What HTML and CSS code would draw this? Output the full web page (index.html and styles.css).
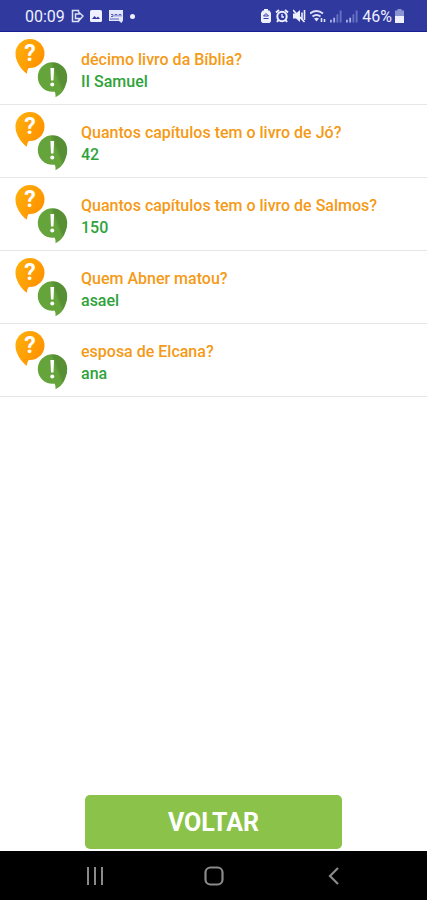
FILE: index.html
```html
<!DOCTYPE html>
<html lang="pt-BR">
<head>
<meta charset="utf-8">
<meta name="viewport" content="width=device-width, initial-scale=1">
<title>Perguntas</title>
<link rel="stylesheet" href="styles.css">
</head>
<body>
<svg class="defs" aria-hidden="true">
  <defs>
    <linearGradient id="amber" gradientUnits="userSpaceOnUse" x1="1" x2="31" y1="5" y2="20">
      <stop offset="0" stop-color="#ffb00a"/>
      <stop offset="1" stop-color="#ff9200"/>
    </linearGradient>
    <linearGradient id="leaf" gradientUnits="userSpaceOnUse" x1="30" x2="50" y1="45" y2="37">
      <stop offset="0.600" stop-color="#65a43a"/>
      <stop offset="0.750" stop-color="#568f34"/>
    </linearGradient>
    <symbol id="qa" viewBox="0 0 54 60">
      <g fill="url(#amber)">
        <circle cx="16" cy="15.500" r="14.500"/>
        <path d="M1.600 18C3 25 7 32 13 35.700c0-2.500 .5-4.200 2-5.900L20 20z"/>
      </g>
      <text x="16" y="23" class="mark">?</text>
      <g fill="url(#leaf)">
        <circle cx="38.500" cy="39" r="14.700"/>
        <path d="M53.100 41C52 49 48.500 56 41.500 59.200c.2-2.300 0-4-1-5.700L36 45z"/>
      </g>
      <path fill="#fff" d="M36.400 30h3.700l-.6 12.500H37z"/>
      <circle cx="38.250" cy="46.500" r="2" fill="#fff"/>
    </symbol>
  </defs>
</svg>

<header class="status">
  <div class="group">
    <span class="time">00:09</span>
    <svg width="13" height="14" viewBox="0 0 13 14" fill="none" stroke="#dde1fa" stroke-width="1.500"><path d="M7.500 3V1.500H1.500v11h6V11M4.500 5v4.500h3.500v2L12 7 8 3.500V5z"/></svg>
    <svg width="12" height="12" viewBox="0 0 12 12"><rect width="12" height="12" rx="1.500" fill="#eef0ff"/><path d="M2 9l2.500-3 2 2 1.500-1.500L10 9z" fill="#303a9e"/></svg>
    <svg width="16" height="13" viewBox="0 0 16 13"><path d="M1 0h14v10.500L13.500 13 11 11H1z" fill="#e4e7fb"/><path d="M3 4.500h2v2H3m4 0v-2h2v2m2 0v-2h2v2M2 9h9" stroke="#5660b4" fill="none"/></svg>
    <span class="dot"></span>
  </div>
  <div class="group right">
    <svg width="10" height="14" viewBox="0 0 10 14"><path d="M3 0h4v1.500h1.500L10 4v8.500L8.500 14h-7L0 12.500V4l1.500-2.500H3z" fill="#eef0ff"/><path d="M5 4.500L2.500 7h5zM2.500 9.500h5" stroke="#303a9e" fill="none"/></svg>
    <svg width="14" height="14" viewBox="0 0 14 14" fill="none" stroke="#eef0ff" stroke-width="2"><circle cx="7" cy="7.500" r="4.700"/><path d="M1 3.500L4 1M13 3.500L10 1M3.500 11l-1.500 2M10.500 11l1.500 2"/><path d="M7 5v3h2" stroke-width="1.300"/></svg>
    <svg width="13" height="14" viewBox="0 0 13 14"><path d="M0 4.500h3L7 1v12L3 9.500H0z" fill="#eef0ff"/><path d="M0 1l11.500 12M9 3.500v7M11.500 1v10" stroke="#eef0ff" stroke-width="1.600"/></svg>
    <svg width="16" height="14" viewBox="0 0 16 14" fill="none" stroke="#dfe3fa" stroke-width="2"><path d="M0 4.500Q6.500 -.5 13 4.500M2.500 7.500Q6.500 4.500 10.500 7.500"/><path d="M6.500 12.500L4 9.500Q6.500 8 9 9.500z" fill="#dfe3fa" stroke="none"/><path d="M11.500 9v4M14.500 10v3" stroke-width="1.600"/></svg>
    <svg width="12" height="14" viewBox="0 0 13 14" fill="#aab1e6"><path d="M0 11h2v3H0zM3.500 9h2v5h-2z"/><path d="M7 5h2v9H7zM10.500 1h2v13h-2z" fill="#6872c2"/></svg>
    <svg width="12" height="14" viewBox="0 0 13 14" fill="#aab1e6"><path d="M0 11h2v3H0zM3.500 9h2v5h-2z"/><path d="M7 5h2v9H7zM10.500 1h2v13h-2z" fill="#6872c2"/></svg>
    <span class="battery">46%<svg width="9" height="14" viewBox="0 0 9 14"><path d="M2.500 0h4v1.500H9V8H0V1.500h2.500z" fill="#8b93d2"/><path d="M0 7h9v7H0z" fill="#eef0ff"/></svg></span>
  </div>
</header>

<main class="content">
  <ul class="list">
    <li class="row"><svg class="qa"><use href="#qa"/></svg><div class="texts"><p class="question">décimo livro da Bíblia?</p><p class="answer">II Samuel</p></div></li>
    <li class="row"><svg class="qa"><use href="#qa"/></svg><div class="texts"><p class="question">Quantos capítulos tem o livro de Jó?</p><p class="answer">42</p></div></li>
    <li class="row"><svg class="qa"><use href="#qa"/></svg><div class="texts"><p class="question">Quantos capítulos tem o livro de Salmos?</p><p class="answer">150</p></div></li>
    <li class="row"><svg class="qa"><use href="#qa"/></svg><div class="texts"><p class="question">Quem Abner matou?</p><p class="answer">asael</p></div></li>
    <li class="row"><svg class="qa"><use href="#qa"/></svg><div class="texts"><p class="question">esposa de Elcana?</p><p class="answer">ana</p></div></li>
  </ul>
  <button class="back" type="button">VOLTAR</button>
</main>

<nav class="navbar">
  <button type="button" aria-label="Recentes"><svg width="20" height="20" viewBox="0 0 20 20" fill="none" stroke="#8a8a8a" stroke-width="2"><path d="M3 1v18M10 1v18M17 1v18"/></svg></button>
  <button type="button" aria-label="Início"><svg width="20" height="20" viewBox="0 0 20 20" fill="none" stroke="#8a8a8a" stroke-width="2.200"><rect x="1.500" y="1.500" width="17" height="17" rx="5"/></svg></button>
  <button type="button" aria-label="Voltar"><svg width="20" height="20" viewBox="0 0 20 20" fill="none" stroke="#8a8a8a" stroke-width="2.200"><path d="M14 2L6 10l8 8"/></svg></button>
</nav>
</body>
</html>
```
FILE: styles.css
```css
* {
  box-sizing: border-box;
}

body {
  margin: 0;
  min-height: 100vh;
  display: flex;
  flex-direction: column;
  background: #fff;
  font-family: Roboto, sans-serif;
}

.defs {
  position: absolute;
  width: 0;
  height: 0;
}

.mark {
  fill: #fff;
  font-family: Roboto, sans-serif;
  font-size: 23px;
  font-weight: 700;
  text-anchor: middle;
}

.status {
  display: flex;
  justify-content: space-between;
  align-items: center;
  height: 32px;
  padding: 1px 23px 0 25px;
  background: #303a9e;
  border-bottom: 1px solid #1a1f97;
  color: #eef0ff;
  font-size: 16px;
}

.group {
  display: flex;
  align-items: center;
  gap: 6px;
}

.right {
  gap: 4px;
}

.battery {
  display: flex;
  align-items: center;
  gap: 3px;
}

.dot {
  width: 5px;
  height: 5px;
  border-radius: 50%;
  background: #eef0ff;
}

.content {
  flex: 1;
  display: flex;
  flex-direction: column;
  justify-content: space-between;
  align-items: center;
  padding-bottom: 2px;
}

.list {
  width: 100%;
  margin: 0;
  padding: 0;
  list-style: none;
}

.row {
  display: flex;
  align-items: flex-start;
  gap: 13px;
  padding: 6px 14px;
  border-bottom: 1px solid #e6e6e6;
}

.qa {
  width: 54px;
  height: 60px;
  flex: none;
}

.texts {
  padding-top: 12px;
  font-size: 16px;
  font-weight: 500;
  line-height: 20px;
}

.question,
.answer {
  margin: 0;
}

.question {
  height: 18px;
  margin-bottom: 4px;
  overflow: hidden;
  color: #f59a16;
}

.answer {
  color: #2fa33b;
}

.back {
  width: 60%;
  height: 54px;
  padding: 2px 0 0;
  border: 0;
  border-radius: 5px;
  background: #8bc34a;
  color: #fff;
  font: 700 25px/28px Roboto, sans-serif;
}

.navbar {
  display: flex;
  justify-content: space-around;
  align-items: center;
  height: 49px;
  padding: 0 33px 0 35px;
  background: #000;
}

.navbar button {
  display: flex;
  padding: 0;
  border: 0;
  background: none;
}
```
